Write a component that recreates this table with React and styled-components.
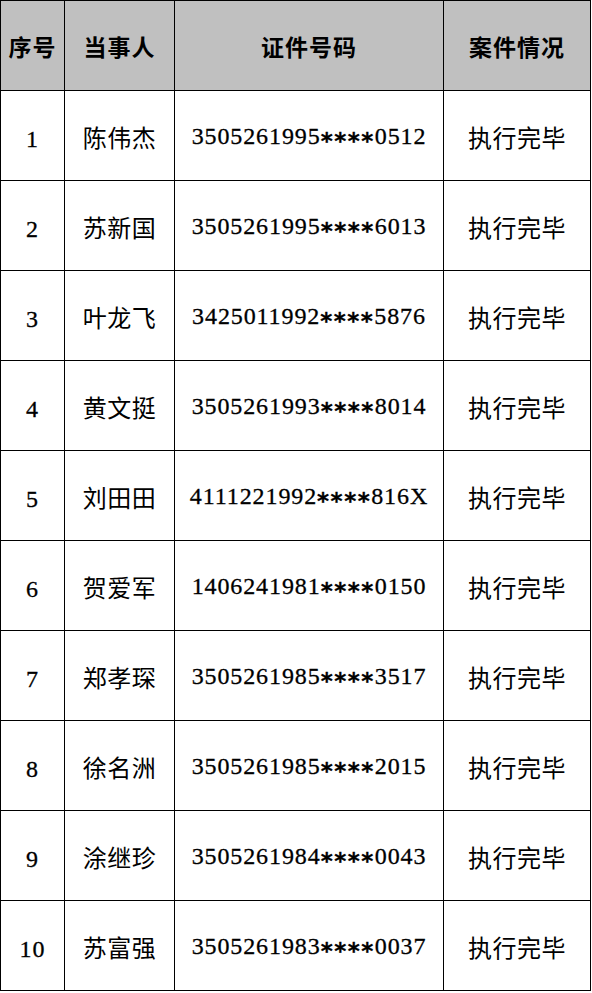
import React from "react";
import styled, { createGlobalStyle } from "styled-components";

const Global = createGlobalStyle`
  html, body { margin: 0; padding: 0; background: #fff; }
  body { font-family: "Liberation Serif", "Noto Sans CJK SC", serif; }
`;

const Table = styled.table`
  border-collapse: collapse;
  table-layout: fixed;
  width: 591px;
  margin: 0;
`;

const Col = styled.col`
  width: ${(p) => p.$w}px;
`;

const Th = styled.th`
  height: 89px;
  padding: 0;
  border: 1px solid #000;
  background: #c0c0c0;
  color: #000;
  font-family: "Noto Sans CJK SC", sans-serif;
  font-weight: 700;
  font-size: 23px;
  letter-spacing: 1px;
  text-align: center;
  vertical-align: middle;
`;

const Td = styled.td`
  height: ${(p) => (p.$cjk ? 86 : 83)}px;
  padding: ${(p) => (p.$cjk ? 3 : 6)}px 0 0 0;
  border: 1px solid #000;
  color: #000;
  font-size: 24px;
  line-height: 1;
  text-align: center;
  vertical-align: middle;
  white-space: nowrap;
  font-family: ${(p) =>
    p.$cjk
      ? `"Noto Sans CJK SC", sans-serif`
      : `"Liberation Serif", "Noto Sans CJK SC", serif`};
  font-weight: 400;
  letter-spacing: ${(p) => (p.$cjk ? "0.5px" : "0.9px")};
  -webkit-text-stroke: ${(p) => (p.$cjk ? "0" : "0.3px")};
`;

const Mask = styled.span`
  font-family: "DejaVu Sans", sans-serif;
  font-weight: 700;
  font-size: 23px;
  letter-spacing: 1.5px;
  vertical-align: -5px;
`;

const rows = [
  ["1", "陈伟杰", "3505261995", "0512"],
  ["2", "苏新国", "3505261995", "6013"],
  ["3", "叶龙飞", "3425011992", "5876"],
  ["4", "黄文挺", "3505261993", "8014"],
  ["5", "刘田田", "4111221992", "816X"],
  ["6", "贺爱军", "1406241981", "0150"],
  ["7", "郑孝琛", "3505261985", "3517"],
  ["8", "徐名洲", "3505261985", "2015"],
  ["9", "涂继珍", "3505261984", "0043"],
  ["10", "苏富强", "3505261983", "0037"],
];

export default function App() {
  return (
    <>
      <Global />
      <Table>
        <colgroup>
          <Col $w={64} />
          <Col $w={110} />
          <Col $w={269} />
          <Col $w={147} />
        </colgroup>
        <thead>
          <tr>
            <Th>序号</Th>
            <Th>当事人</Th>
            <Th>证件号码</Th>
            <Th>案件情况</Th>
          </tr>
        </thead>
        <tbody>
          {rows.map(([n, name, head, tail]) => (
            <tr key={n}>
              <Td>{n}</Td>
              <Td $cjk>{name}</Td>
              <Td>
                {head}
                <Mask>****</Mask>
                {tail}
              </Td>
              <Td $cjk>执行完毕</Td>
            </tr>
          ))}
        </tbody>
      </Table>
    </>
  );
}
